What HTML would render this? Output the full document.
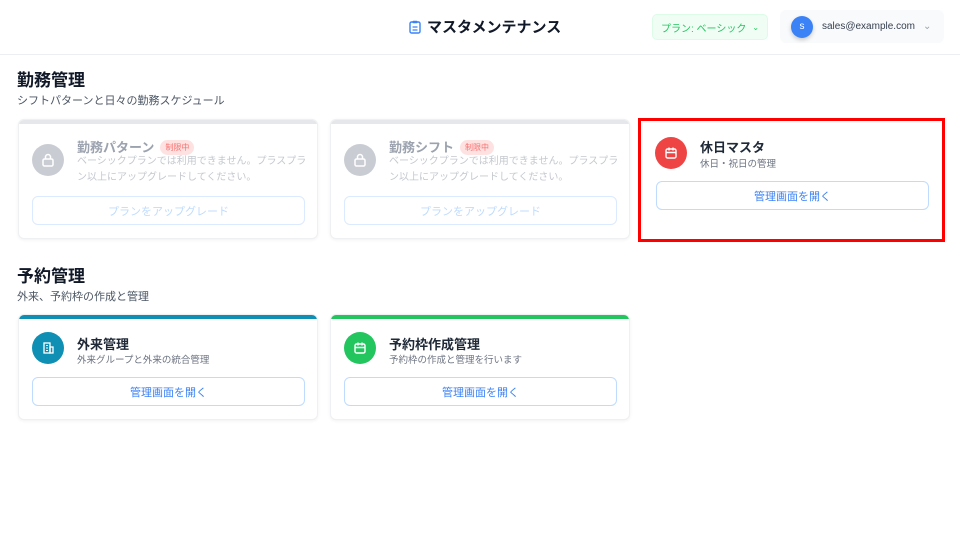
<!DOCTYPE html>
<html><head><meta charset="utf-8"><style>
*{box-sizing:border-box;margin:0;padding:0}
body{width:960px;height:540px;background:#fff;font-family:"Liberation Sans","Noto Sans CJK JP",sans-serif;position:relative;overflow:hidden;color:#1f2937}
.hdr{position:absolute;left:0;top:0;width:960px;height:55px;border-bottom:1px solid #eceef1;background:#fff}
.title{position:absolute;left:409px;top:16px;font-size:15px;font-weight:bold;color:#111827;display:flex;align-items:center;gap:6px}
.plan{position:absolute;left:652px;top:14px;width:116px;height:26px;background:#f0fdf4;border:1px solid #dcfce7;border-radius:5px;color:#22c55e;font-size:10px;display:flex;align-items:center;justify-content:center;gap:6px}
.user{position:absolute;left:780px;top:10px;width:164px;height:33px;background:#f9fafb;border-radius:6px;display:flex;align-items:center;padding-left:11px;font-size:10px;color:#374151}
.av{width:22px;height:22px;border-radius:50%;background:#3b82f6;color:#fff;font-size:10px;display:flex;align-items:center;justify-content:center;margin-right:9px;box-shadow:0 2px 4px rgba(0,0,0,.2)}
h2{position:absolute;left:17px;font-size:17px;font-weight:bold;color:#111827}
.sub{position:absolute;left:17px;font-size:11px;color:#4b5563}
.card{position:absolute;width:300px;background:#fff;border:1px solid #eef0f2;border-radius:6px;box-shadow:0 1px 3px rgba(0,0,0,.06);overflow:hidden}
.bar{height:4px}
.ic{position:absolute;left:13px;width:32px;height:32px;border-radius:50%;display:flex;align-items:center;justify-content:center}
.t{position:absolute;left:58px;font-size:13px;font-weight:bold;color:#1f2937}
.d{position:absolute;left:58px;font-size:9.5px;color:#6b7280}
.btn{position:absolute;left:13px;width:273px;height:29px;border:1px solid #bfdbfe;border-radius:6px;display:flex;align-items:center;justify-content:center;color:#3b82f6;font-size:11px}
.dis .t{color:#9ca3af}.dis .d{color:#c4c8ce;line-height:16px;font-size:10px}.dis .btn{color:#bfdbfe;border-color:#dbeafe}
.tag{display:inline-block;background:#fee2e2;color:#f87171;font-size:8px;font-weight:normal;padding:2px 5px;border-radius:8px;margin-left:6px;vertical-align:2px}
</style></head><body>
<div class="hdr">
<div class="title"><svg width="12" height="14" viewBox="0 0 12 14"><rect x="1" y="2" width="10" height="11" rx="1.5" fill="none" stroke="#3b82f6" stroke-width="1.4"/><rect x="3.5" y="0.8" width="5" height="2.5" rx=".8" fill="#3b82f6"/><path d="M3.5 7h5M3.5 10h5" stroke="#3b82f6" stroke-width="1.2"/></svg>マスタメンテナンス</div>
<div class="plan">プラン: ベーシック <span style="font-size:8px">⌄</span></div>
<div class="user"><div class="av">s</div>sales@example.com<span style="margin-left:8px;color:#9ca3af">⌄</span></div>
</div>
<h2 style="top:66px">勤務管理</h2>
<div class="sub" style="top:92px">シフトパターンと日々の勤務スケジュール</div>

<div class="card dis" style="left:18px;top:119px;height:120px"><div class="bar" style="background:#e5e7eb"></div>
<div class="ic" style="top:24px;background:#c9cdd3"><svg width="14" height="14" viewBox="0 0 14 14"><rect x="2" y="6" width="10" height="7" rx="1.5" fill="none" stroke="#fff" stroke-width="1.5"/><path d="M4.5 6V4a2.5 2.5 0 0 1 5 0v2" fill="none" stroke="#fff" stroke-width="1.5"/></svg></div>
<div class="t" style="top:17px">勤務パターン<span class="tag">制限中</span></div>
<div class="d" style="top:34px;width:232px">ベーシックプランでは利用できません。プラスプラン以上にアップグレードしてください。</div>
<div class="btn" style="top:76px">プランをアップグレード</div></div>

<div class="card dis" style="left:330px;top:119px;height:120px"><div class="bar" style="background:#e5e7eb"></div>
<div class="ic" style="top:24px;background:#c9cdd3"><svg width="14" height="14" viewBox="0 0 14 14"><rect x="2" y="6" width="10" height="7" rx="1.5" fill="none" stroke="#fff" stroke-width="1.5"/><path d="M4.5 6V4a2.5 2.5 0 0 1 5 0v2" fill="none" stroke="#fff" stroke-width="1.5"/></svg></div>
<div class="t" style="top:17px">勤務シフト<span class="tag">制限中</span></div>
<div class="d" style="top:34px;width:232px">ベーシックプランでは利用できません。プラスプラン以上にアップグレードしてください。</div>
<div class="btn" style="top:76px">プランをアップグレード</div></div>

<div style="position:absolute;left:638px;top:118px;width:307px;height:124px;border:3px solid #f00"></div>
<div class="card" style="left:642px;top:122px;height:116px;border:none;box-shadow:none">
<div class="ic" style="top:15px;background:#ef4444"><svg width="14" height="14" viewBox="0 0 14 14"><rect x="2" y="3" width="10" height="9" rx="1.5" fill="none" stroke="#fff" stroke-width="1.4"/><path d="M2 6.5h10M5 1.5v3M9 1.5v3" stroke="#fff" stroke-width="1.4"/></svg></div>
<div class="t" style="top:15px">休日マスタ</div>
<div class="d" style="top:34px">休日・祝日の管理</div>
<div class="btn" style="top:59px;left:14px">管理画面を開く</div></div>

<h2 style="top:262px">予約管理</h2>
<div class="sub" style="top:288px">外来、予約枠の作成と管理</div>

<div class="card" style="left:18px;top:314px;height:106px"><div class="bar" style="background:#0e8fb3"></div>
<div class="ic" style="top:17px;background:#0e8fb3"><svg width="14" height="14" viewBox="0 0 14 14"><rect x="3" y="2" width="6" height="10" fill="none" stroke="#fff" stroke-width="1.3"/><rect x="9" y="6" width="3" height="6" fill="none" stroke="#fff" stroke-width="1.3"/><path d="M5 4.5h2M5 7h2M5 9.5h2" stroke="#fff"/></svg></div>
<div class="t" style="top:19px">外来管理</div>
<div class="d" style="top:37px">外来グループと外来の統合管理</div>
<div class="btn" style="top:62px">管理画面を開く</div></div>

<div class="card" style="left:330px;top:314px;height:106px"><div class="bar" style="background:#22c55e"></div>
<div class="ic" style="top:17px;background:#22c55e"><svg width="14" height="14" viewBox="0 0 14 14"><rect x="2" y="3" width="10" height="9" rx="1.5" fill="none" stroke="#fff" stroke-width="1.4"/><path d="M2 6.5h10M5 1.5v3M9 1.5v3" stroke="#fff" stroke-width="1.4"/></svg></div>
<div class="t" style="top:19px">予約枠作成管理</div>
<div class="d" style="top:37px">予約枠の作成と管理を行います</div>
<div class="btn" style="top:62px">管理画面を開く</div></div>
</body></html>
